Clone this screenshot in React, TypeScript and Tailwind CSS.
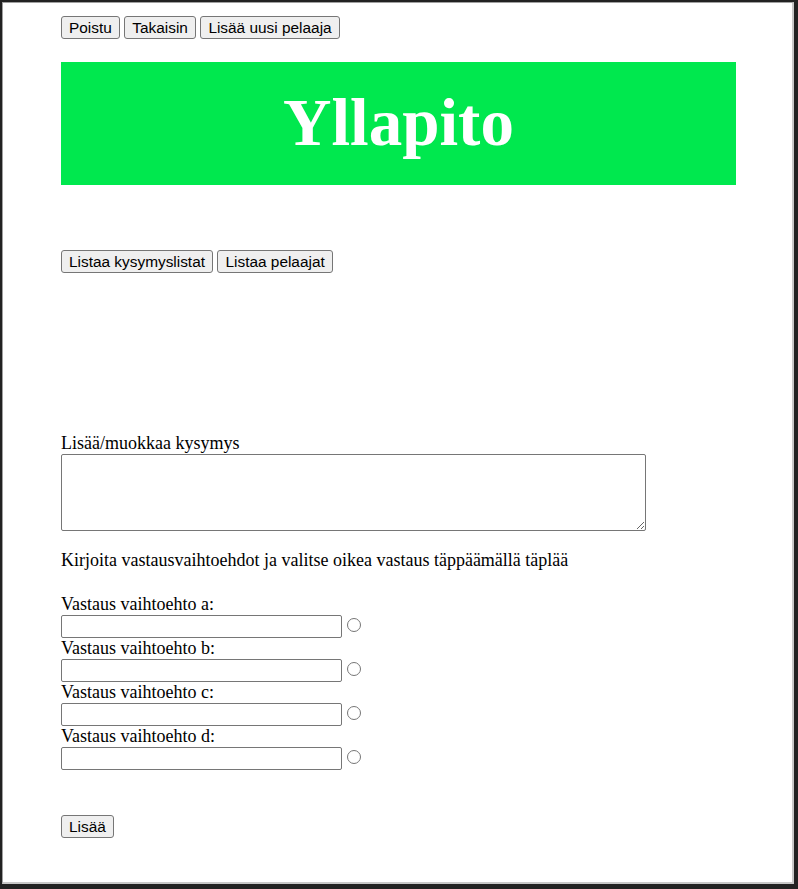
import React from 'react';

const btn =
  "bg-[#efefef] border border-[#767676] rounded-[3px] px-[7px] py-[1px] text-[15.4px] leading-[19px] text-black font-['Liberation_Sans',Arial,sans-serif]";

const field = "block bg-white border border-[#767676] rounded-[2px]";

const Answer = ({ letter }: { letter: string }) => (
  <div>
    <label className="block leading-[21px]">Vastaus vaihtoehto {letter}:</label>
    <div className="flex items-start">
      <input type="text" className={`${field} w-[281px] h-[23px] px-[2px]`} />
      <input type="radio" name="oikea" className="ml-[5px] mt-[3px] w-[14px] h-[14px]" />
    </div>
  </div>
);

export default function App() {
  return (
    <div className="w-[798px] h-[889px] flex border-[#222] border-t-2 border-l-2 border-r-4 border-b-[5px] bg-[#222]">
      <div className="flex-1 bg-white border-t border-l border-[#a0a0a0] border-r-2 border-b-2 border-r-[#c8c8c8] border-b-[#c8c8c8] pl-[58px] pt-[13px] text-[18px] text-black font-['Liberation_Serif','Times_New_Roman',serif]">
        <div className="flex gap-[4.5px]">
          <button className={btn}>Poistu</button>
          <button className={btn}>Takaisin</button>
          <button className={btn}>Lisää uusi pelaaja</button>
        </div>

        <div className="mt-[23px] w-[675px] h-[123px] bg-[#00e84e] flex items-center justify-center pb-[3px]">
          <h1 className="text-white font-bold text-[67px] leading-none">Yllapito</h1>
        </div>

        <div className="mt-[65px] flex gap-[4.5px]">
          <button className={btn}>Listaa kysymyslistat</button>
          <button className={btn}>Listaa pelaajat</button>
        </div>

        <div className="mt-[160px]">
          <label className="block leading-[21px]">Lisää/muokkaa kysymys</label>
          <textarea className={`${field} w-[585px] h-[77px]`} />
        </div>

        <p className="mt-[19px] leading-[21px]">
          Kirjoita vastausvaihtoehdot ja valitse oikea vastaus täppäämällä täplää
        </p>

        <div className="mt-[23px]">
          <Answer letter="a" />
          <Answer letter="b" />
          <Answer letter="c" />
          <Answer letter="d" />
        </div>

        <div className="mt-[43px]">
          <button className={btn}>Lisää</button>
        </div>
      </div>
    </div>
  );
}
